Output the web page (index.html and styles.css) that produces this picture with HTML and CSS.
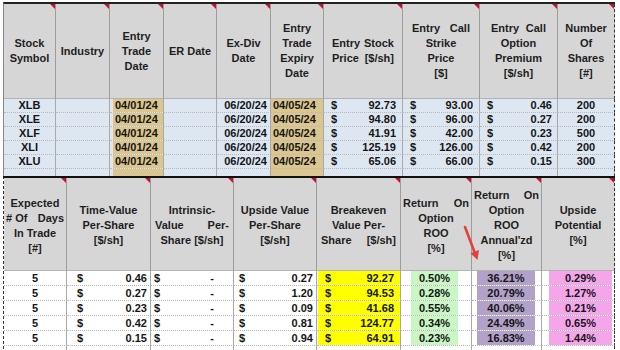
FILE: index.html
```html
<!DOCTYPE html>
<html>
<head>
<meta charset="utf-8">
<link rel="stylesheet" href="styles.css">
</head>
<body>
<div class="sheet">
  <table class="top">
    <colgroup>
      <col style="width:52px"><col style="width:54px"><col style="width:54px"><col style="width:53px"><col style="width:54px">
      <col style="width:53px"><col style="width:79px"><col style="width:77px"><col style="width:78px"><col style="width:57px">
    </colgroup>
    <thead>
      <tr>
        <th>Stock<br>Symbol</th>
        <th>Industry</th>
        <th>Entry<br>Trade<br>Date</th>
        <th>ER Date</th>
        <th>Ex-Div<br>Date</th>
        <th>Entry<br>Trade<br>Expiry<br>Date</th>
        <th class="p8"><span class="sp"><span>Entry</span><span>Stock</span></span><span class="sp"><span>Price</span><span>[$/sh]</span></span></th>
        <th class="p9"><span class="sp"><span>Entry</span><span>Call</span></span>Strike Price<br>[$]</th>
        <th class="p11"><span class="sp"><span>Entry</span><span>Call</span></span>Option<br>Premium<br>[$/sh]</th>
        <th class="last">Number<br>Of<br>Shares<br>[#]</th>
      </tr>
    </thead>
    <tbody>
      <tr><td class="c">XLB</td><td></td><td class="tanw"><div class="tan">04/01/24</div></td><td></td><td class="r">06/20/24</td><td class="tanf">04/05/24</td><td><div class="acc a1"><span>$</span><span>92.73</span></div></td><td><div class="acc a2"><span>$</span><span>93.00</span></div></td><td><div class="acc a3"><span>$</span><span>0.46</span></div></td><td class="c last">200</td></tr>
      <tr><td class="c">XLE</td><td></td><td class="tanw"><div class="tan">04/01/24</div></td><td></td><td class="r">06/20/24</td><td class="tanf">04/05/24</td><td><div class="acc a1"><span>$</span><span>94.80</span></div></td><td><div class="acc a2"><span>$</span><span>96.00</span></div></td><td><div class="acc a3"><span>$</span><span>0.27</span></div></td><td class="c last">200</td></tr>
      <tr><td class="c">XLF</td><td></td><td class="tanw"><div class="tan">04/01/24</div></td><td></td><td class="r">06/20/24</td><td class="tanf">04/05/24</td><td><div class="acc a1"><span>$</span><span>41.91</span></div></td><td><div class="acc a2"><span>$</span><span>42.00</span></div></td><td><div class="acc a3"><span>$</span><span>0.23</span></div></td><td class="c last">500</td></tr>
      <tr><td class="c">XLI</td><td></td><td class="tanw"><div class="tan">04/01/24</div></td><td></td><td class="r">06/20/24</td><td class="tanf">04/05/24</td><td><div class="acc a1"><span>$</span><span>125.19</span></div></td><td><div class="acc a2"><span>$</span><span>126.00</span></div></td><td><div class="acc a3"><span>$</span><span>0.42</span></div></td><td class="c last">200</td></tr>
      <tr><td class="c">XLU</td><td></td><td class="tanw"><div class="tan">04/01/24</div></td><td></td><td class="r">06/20/24</td><td class="tanf">04/05/24</td><td><div class="acc a1"><span>$</span><span>65.06</span></div></td><td><div class="acc a2"><span>$</span><span>66.00</span></div></td><td><div class="acc a3"><span>$</span><span>0.15</span></div></td><td class="c last">300</td></tr>
      <tr class="spacer"><td></td><td></td><td class="tanw"><div class="tan"></div></td><td></td><td></td><td class="tanf"></td><td></td><td></td><td></td><td class="last"></td></tr>
    </tbody>
  </table>

  <table class="bot">
    <colgroup>
      <col style="width:63px"><col style="width:84px"><col style="width:83px"><col style="width:83px">
      <col style="width:84px"><col style="width:71px"><col style="width:70px"><col style="width:73px">
    </colgroup>
    <thead>
      <tr>
        <th class="p1"><span class="ln">Expected</span><span class="sp"><span># Of</span><span>Days</span></span><span class="ln">In Trade</span><span class="ln">[#]</span></th>
        <th>Time-Value<br>Per-Share<br>[$/sh]</th>
        <th class="p3"><span class="ln">Intrinsic-</span><span class="sp"><span>Value</span><span>Per-</span></span><span class="ln">Share [$/sh]</span></th>
        <th>Upside Value<br>Per-Share<br>[$/sh]</th>
        <th class="p3"><span class="ln">Breakeven</span><span class="ln">Value Per-</span><span class="sp"><span>Share</span><span>[$/sh]</span></span></th>
        <th class="p1"><span class="sp"><span>Return</span><span>On</span></span><span class="ln">Option</span><span class="ln">ROO</span><span class="ln">[%]</span></th>
        <th class="p1"><span class="sp"><span>Return</span><span>On</span></span><span class="ln">Option</span><span class="ln">ROO</span><span class="ln">Annual'zd</span><span class="ln">[%]</span></th>
        <th class="last">Upside<br>Potential<br>[%]</th>
      </tr>
    </thead>
    <tbody>
      <tr class="h15"><td class="c">5</td><td><div class="acc b2"><span>$</span><span>0.46</span></div></td><td><div class="acc b3"><span>$</span><span>-</span></div></td><td><div class="acc b4"><span>$</span><span>0.27</span></div></td><td><div class="acc b5 yel"><span>$</span><span>92.27</span></div></td><td><div class="box grn">0.50%</div></td><td><div class="box pur">36.21%</div></td><td class="last"><div class="box pnk">0.29%</div></td></tr>
      <tr><td class="c">5</td><td><div class="acc b2"><span>$</span><span>0.27</span></div></td><td><div class="acc b3"><span>$</span><span>-</span></div></td><td><div class="acc b4"><span>$</span><span>1.20</span></div></td><td><div class="acc b5 yel"><span>$</span><span>94.53</span></div></td><td><div class="box grn">0.28%</div></td><td><div class="box pur">20.79%</div></td><td class="last"><div class="box pnk">1.27%</div></td></tr>
      <tr class="h15"><td class="c">5</td><td><div class="acc b2"><span>$</span><span>0.23</span></div></td><td><div class="acc b3"><span>$</span><span>-</span></div></td><td><div class="acc b4"><span>$</span><span>0.09</span></div></td><td><div class="acc b5 yel"><span>$</span><span>41.68</span></div></td><td><div class="box grn">0.55%</div></td><td><div class="box pur">40.06%</div></td><td class="last"><div class="box pnk">0.21%</div></td></tr>
      <tr><td class="c">5</td><td><div class="acc b2"><span>$</span><span>0.42</span></div></td><td><div class="acc b3"><span>$</span><span>-</span></div></td><td><div class="acc b4"><span>$</span><span>0.81</span></div></td><td><div class="acc b5 yel"><span>$</span><span>124.77</span></div></td><td><div class="box grn">0.34%</div></td><td><div class="box pur">24.49%</div></td><td class="last"><div class="box pnk">0.65%</div></td></tr>
      <tr class="h15"><td class="c">5</td><td><div class="acc b2"><span>$</span><span>0.15</span></div></td><td><div class="acc b3"><span>$</span><span>-</span></div></td><td><div class="acc b4"><span>$</span><span>0.94</span></div></td><td><div class="acc b5 yel"><span>$</span><span>64.91</span></div></td><td><div class="box grn">0.23%</div></td><td><div class="box pur">16.83%</div></td><td class="last"><div class="box pnk">1.44%</div></td></tr>
      <tr class="tail"><td></td><td></td><td></td><td></td><td></td><td></td><td></td><td class="last"></td></tr>
    </tbody>
  </table>

  <svg class="arrow" width="26" height="42" viewBox="0 0 26 42">
    <line x1="6" y1="4" x2="15.5" y2="29" stroke="#e2413f" stroke-width="2.6" stroke-linecap="round"/>
    <polygon points="18.5,37 20,27 11.5,30.3" fill="#e2413f"/>
  </svg>
</div>
</body>
</html>
```

FILE: styles.css
```css
html, body {
  margin: 0;
  background: #ffffff;
}
body {
  font-family: "Liberation Sans", Arial, sans-serif;
  font-weight: bold;
  font-size: 11px;
  color: #151515;
}
.sheet {
  position: relative;
  width: 620px;
  height: 350px;
  box-sizing: border-box;
  padding: 2px 0 0 3px;
  overflow: hidden;
}
table {
  border-collapse: separate;
  border-spacing: 0;
  table-layout: fixed;
  width: 611px;
}
.top {
  border-top: 2px solid #222;
  border-left: 1px solid #8a8a8a;
}
.bot {
  border-top: 2px solid #111;
  border-left: 1px dashed #333;
}
th {
  position: relative;
  background: #d6d6d6;
  border-right: 1px solid #9c9c9c;
  border-bottom: 1px solid #b3b3b3;
  padding: 0 3px;
  line-height: 15px;
  font-size: 11px;
  font-weight: bold;
  color: #1e1e1e;
  text-align: center;
  vertical-align: middle;
}
.top th { height: 95px; box-sizing: border-box; }
.bot th { height: 93px; box-sizing: border-box; padding-top: 3px; }
th::after {
  content: "";
  position: absolute;
  top: 0;
  right: 0;
  border-top: 5px solid #c8102e;
  border-left: 5px solid transparent;
}
th.last, td.last { border-right: 1px dashed #333; }
.sp {
  display: flex;
  justify-content: space-between;
}
.ln { display: block; }
.p1 { padding-left: 2px; padding-right: 2px; }
.p3 { padding-left: 4px; padding-right: 4px; }
.p8 { padding: 0 8px; }
.p9 { padding: 0 9px; }
.p11 { padding: 0 11px; }

td {
  padding: 0;
  height: 14px;
  box-sizing: border-box;
  border-right: 1px solid #a9a9a9;
  border-bottom: 1px dotted #b8b8b8;
  line-height: 13px;
  white-space: nowrap;
  overflow: hidden;
}
.top td { background: #dde7f2; }
.top .spacer td { height: 7px; border-bottom: none; }
.c { text-align: center; }
.r { text-align: right; padding-right: 3px; }
.tanw { padding-left: 3px; }
.tan {
  background: #dcc690;
  padding-left: 2px;
  height: 13px;
}
.spacer .tan { height: 7px; }
td.tanf { background: #dcc690; padding-left: 2px; }
.acc {
  display: flex;
  justify-content: space-between;
}
.a1 { padding: 0 6px 0 7px; }
.a2 { padding: 0 6px 0 7px; }
.a3 { padding: 0 5px 0 7px; }

.bot td { background: #ffffff; height: 14px; }
.bot tr.h15 td { height: 15px; }
.bot .tail td { height: 8px; border-bottom: none; }
.bot td > div { height: 100%; line-height: 14px; }
.b2 { padding: 0 3px 0 10px; }
.b3 { padding: 0 19px 0 3px; }
.b4 { padding: 0 3px 0 5px; }
.b5 { padding: 0 6px 0 7px; margin-left: 1px; }
.yel { background: #ffff00; }
.box { text-align: center; }
.grn { background: #c9f7c3; margin: 0 13px 0 10px; }
.pur { background: #b2a2c9; margin: 0 6px 0 5px; }
.pnk { background: #f5a6ea; margin: 0 2px 0 7px; }

.arrow {
  position: absolute;
  left: 459px;
  top: 223px;
}
```
